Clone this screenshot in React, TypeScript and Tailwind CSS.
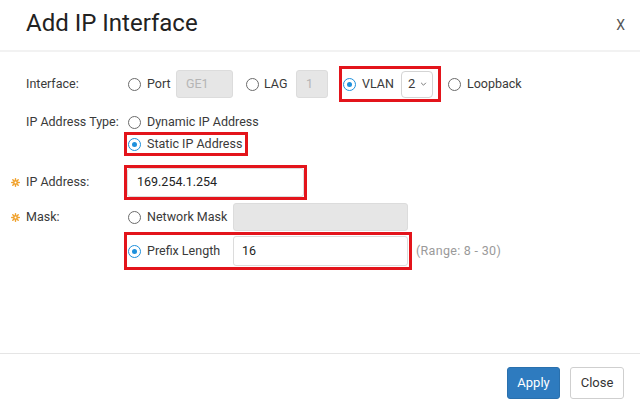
import React from 'react'

function Radio({ checked = false }: { checked?: boolean }) {
  return (
    <span
      className={
        checked
          ? 'inline-flex w-[13px] h-[13px] shrink-0 rounded-full border border-[#1e90dc] bg-white items-center justify-center'
          : 'inline-flex w-[13px] h-[13px] shrink-0 rounded-full border border-[#6b6b6b] bg-white'
      }
    >
      {checked && <span className="w-[5px] h-[5px] rounded-full bg-[#1e90dc]" />}
    </span>
  )
}

function Required() {
  return (
    <svg width="9" height="9" viewBox="0 0 10 10" className="-ml-[15px] mr-[6px] shrink-0">
      <g stroke="#f0a12c" strokeWidth="1.6" strokeLinecap="round">
        <line x1="5" y1="0.8" x2="5" y2="9.2" />
        <line x1="0.8" y1="5" x2="9.2" y2="5" />
        <line x1="2" y1="2" x2="8" y2="8" />
        <line x1="8" y1="2" x2="2" y2="8" />
      </g>
      <circle cx="5" cy="5" r="2.6" fill="#f0a12c" />
      <circle cx="5" cy="5" r="1.1" fill="#fff" />
    </svg>
  )
}

export default function App() {
  return (
    <div className="w-[640px] h-[417px] bg-white flex flex-col font-['Roboto',sans-serif] text-[12.5px] text-[#3a3a3a] whitespace-nowrap">
      <div className="h-[52px] shrink-0 border-b-2 border-[#f2f2f2] flex items-center justify-between pl-[26px] pr-[15px] pb-[4px]">
        <h1 className="text-[24px] text-[#222] leading-none">Add IP Interface</h1>
        <span className="text-[14px] text-[#555] pt-[4px]">X</span>
      </div>

      <div className="flex-1 pl-[26px] pt-[14px]">
        {/* Interface */}
        <div className="flex items-center h-[36px]">
          <span className="w-[98px] shrink-0">Interface:</span>
          <div className="flex items-center pl-[4px]">
            <Radio />
            <span className="ml-[6px] w-[23px]">Port</span>
            <span className="ml-[6px] w-[57px] h-[28px] shrink-0 rounded-[3px] border border-[#dcdcdc] bg-[#e6e6e6] text-[#b5b5b5] flex items-center pl-[9px]">
              GE1
            </span>
            <span className="ml-[13px] flex">
              <Radio />
            </span>
            <span className="ml-[5px] w-[26px]">LAG</span>
            <span className="ml-[6px] w-[32px] h-[28px] shrink-0 rounded-[3px] border border-[#dcdcdc] bg-[#e6e6e6] text-[#b5b5b5] flex items-center pl-[9px]">
              1
            </span>
            <div className="ml-[11px] h-[36px] w-[102px] shrink-0 border-[3px] border-[#e3141b] flex items-center pl-[1px]">
              <Radio checked />
              <span className="ml-[6px] w-[32px]">VLAN</span>
              <span className="ml-[7px] w-[32px] h-[27px] shrink-0 rounded-[4px] border border-[#d4d4d4] flex items-center pl-[6px] text-[13px]">
                2
                <svg width="7" height="4" viewBox="0 0 8 5" className="ml-[5px]">
                  <path d="M1 1l3 3 3-3" fill="none" stroke="#666" strokeWidth="1.1" />
                </svg>
              </span>
            </div>
            <span className="ml-[7px] flex">
              <Radio />
            </span>
            <span className="ml-[6px]">Loopback</span>
          </div>
        </div>

        {/* IP Address Type */}
        <div className="flex items-center h-[20px] mt-[10px]">
          <span className="w-[98px] shrink-0">IP Address Type:</span>
          <div className="flex items-center pl-[4px]">
            <Radio />
            <span className="ml-[6px]">Dynamic IP Address</span>
          </div>
        </div>
        <div className="flex">
          <div className="ml-[98px] w-[124px] h-[24px] shrink-0 border-[3px] border-[#e3141b] flex items-center pl-[1px]">
            <Radio checked />
            <span className="ml-[6px]">Static IP Address</span>
          </div>
        </div>

        {/* IP Address */}
        <div className="flex items-center mt-[9px]">
          <span className="w-[98px] shrink-0 flex items-center">
            <Required />
            IP Address:
          </span>
          <div className="w-[183px] h-[35px] shrink-0 border-[3px] border-[#e3141b] flex items-center">
            <span className="w-[177px] h-[29px] rounded-[3px] border border-[#dcdcdc] flex items-center pl-[9px] text-[#222]">
              169.254.1.254
            </span>
          </div>
        </div>

        {/* Mask */}
        <div className="flex items-center h-[28px] mt-[3px]">
          <span className="w-[98px] shrink-0 flex items-center">
            <Required />
            Mask:
          </span>
          <div className="flex items-center pl-[4px]">
            <Radio />
            <span className="ml-[6px] w-[86px] shrink-0">Network Mask</span>
            <span className="w-[175px] h-[28px] shrink-0 rounded-[3px] border border-[#dcdcdc] bg-[#e6e6e6]" />
          </div>
        </div>
        <div className="flex items-center mt-[1px]">
          <div className="ml-[98px] w-[288px] h-[38px] shrink-0 border-[3px] border-[#e3141b] flex items-center pl-[1px]">
            <Radio checked />
            <span className="ml-[6px] w-[86px] shrink-0">Prefix Length</span>
            <span className="w-[175px] h-[30px] shrink-0 rounded-[3px] border border-[#dcdcdc] flex items-center pl-[8px] text-[#222]">
              16
            </span>
          </div>
          <span className="ml-[4px] text-[#9a9a9a] tracking-[0.3px]">(Range: 8 - 30)</span>
        </div>
      </div>

      <div className="h-[64px] shrink-0 border-t border-[#e5e5e5] flex items-start justify-end gap-[10px] pt-[13px] pr-[16px]">
        <button className="w-[53px] h-[32px] rounded-[3px] bg-[#2e7bbf] border border-[#2a70ad] text-white text-[13px]">
          Apply
        </button>
        <button className="w-[54px] h-[32px] rounded-[3px] bg-white border border-[#cfcfcf] text-[#333] text-[13px]">
          Close
        </button>
      </div>
    </div>
  )
}
